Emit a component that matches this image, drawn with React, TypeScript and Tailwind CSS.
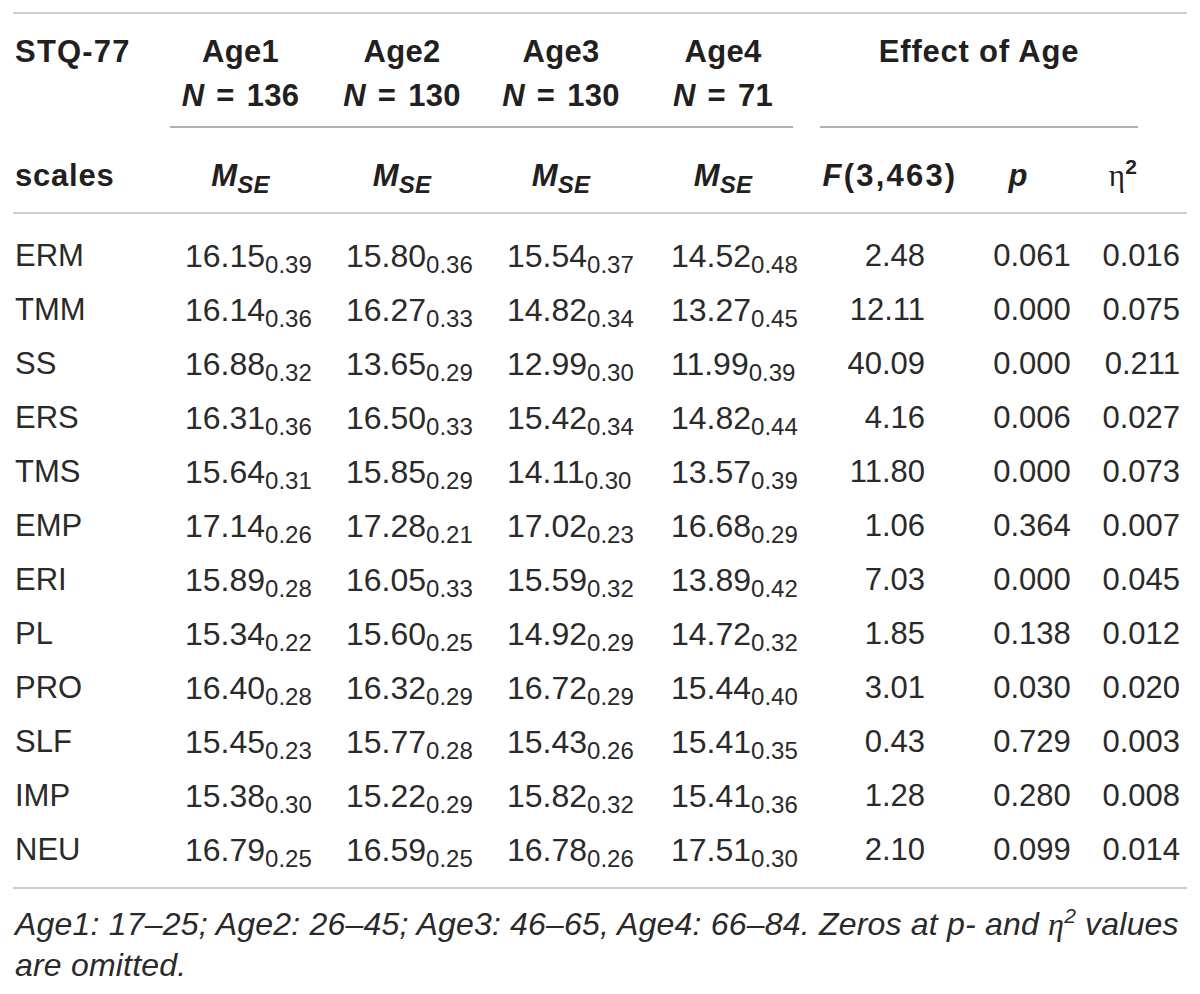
const ROWS: [string, string[], string[], string, string, string][] = [
  ["ERM", ["16.15", "15.80", "15.54", "14.52"], ["0.39", "0.36", "0.37", "0.48"], "2.48", "0.061", "0.016"],
  ["TMM", ["16.14", "16.27", "14.82", "13.27"], ["0.36", "0.33", "0.34", "0.45"], "12.11", "0.000", "0.075"],
  ["SS", ["16.88", "13.65", "12.99", "11.99"], ["0.32", "0.29", "0.30", "0.39"], "40.09", "0.000", "0.211"],
  ["ERS", ["16.31", "16.50", "15.42", "14.82"], ["0.36", "0.33", "0.34", "0.44"], "4.16", "0.006", "0.027"],
  ["TMS", ["15.64", "15.85", "14.11", "13.57"], ["0.31", "0.29", "0.30", "0.39"], "11.80", "0.000", "0.073"],
  ["EMP", ["17.14", "17.28", "17.02", "16.68"], ["0.26", "0.21", "0.23", "0.29"], "1.06", "0.364", "0.007"],
  ["ERI", ["15.89", "16.05", "15.59", "13.89"], ["0.28", "0.33", "0.32", "0.42"], "7.03", "0.000", "0.045"],
  ["PL", ["15.34", "15.60", "14.92", "14.72"], ["0.22", "0.25", "0.29", "0.32"], "1.85", "0.138", "0.012"],
  ["PRO", ["16.40", "16.32", "16.72", "15.44"], ["0.28", "0.29", "0.29", "0.40"], "3.01", "0.030", "0.020"],
  ["SLF", ["15.45", "15.77", "15.43", "15.41"], ["0.23", "0.28", "0.26", "0.35"], "0.43", "0.729", "0.003"],
  ["IMP", ["15.38", "15.22", "15.82", "15.41"], ["0.30", "0.29", "0.32", "0.36"], "1.28", "0.280", "0.008"],
  ["NEU", ["16.79", "16.59", "16.78", "17.51"], ["0.25", "0.25", "0.26", "0.30"], "2.10", "0.099", "0.014"],
];

// per age column: header offset and data left padding
const GROUPS = [
  { label: "Age1", n: "136", head: "pr-[4px]", data: "pl-[20px]" },
  { label: "Age2", n: "130", head: "pl-[8px]", data: "pl-[26px]" },
  { label: "Age3", n: "130", head: "pr-[4px]", data: "pl-[31px]" },
  { label: "Age4", n: "71", head: "pr-[19px]", data: "pl-[21px]" },
];

function Mse() {
  return (
    <span className="italic">
      M<span className="relative top-[7px] text-[24px] leading-none">SE</span>
    </span>
  );
}

function Eta({ bold }: { bold?: boolean }) {
  return (
    <span>
      <span className="font-['Liberation_Serif',serif] font-normal">η</span>
      <span className={`relative -top-[12px] text-[21px] leading-none ${bold ? "font-bold" : ""}`}>2</span>
    </span>
  );
}

export default function App() {
  return (
    <div className="min-h-[994px] bg-white px-[13px] pt-[12px] font-['Liberation_Sans',Arial,sans-serif] text-[#231f20]">
      <table className="w-[1174px] table-fixed border-collapse">
        <colgroup>
          <col className="w-[152px]" />
          <col className="w-[155px]" />
          <col className="w-[156px]" />
          <col className="w-[174px]" />
          <col className="w-[165px]" />
          <col className="w-[150px]" />
          <col className="w-[120px]" />
          <col className="w-[102px]" />
        </colgroup>
        <thead className="text-[31px] font-bold leading-[44px] tracking-[0.3px]">
          <tr className="border-t-2 border-[#cfcfcf] align-top">
            <th className="pt-[16px] pl-[2px] text-left tracking-[1.2px]">STQ-77</th>
            {GROUPS.map((g) => (
              <th key={g.label} className={`pt-[16px] text-center ${g.head}`}>
                <div>{g.label}</div>
                <div className="whitespace-nowrap">
                  <span className="italic">N</span>
                  <span className="mx-[12px]">=</span>
                  {g.n}
                </div>
              </th>
            ))}
            <th colSpan={3} className="pt-[16px]">
              <div className="ml-[5px] mr-[49px] text-center tracking-[0.8px]">Effect of Age</div>
            </th>
          </tr>
          <tr>
            <td className="pt-[8px]" />
            <td colSpan={4} className="pt-[8px]">
              <div className="ml-[5px] mr-[22px] border-t-2 border-[#b0b0b0]" />
            </td>
            <td colSpan={3} className="pt-[8px]">
              <div className="ml-[5px] mr-[49px] border-t-2 border-[#b0b0b0]" />
            </td>
          </tr>
          <tr className="border-b-2 border-[#cfcfcf]">
            <th className="pt-[26px] pb-[14px] pl-[2px] text-left tracking-[0.8px]">scales</th>
            {GROUPS.map((g) => (
              <th key={g.label} className={`pt-[26px] pb-[14px] text-center ${g.head}`}>
                <Mse />
              </th>
            ))}
            <th className="pt-[26px] pb-[14px] text-center tracking-[2.2px]">
              <span className="italic">F</span>(3,463)
            </th>
            <th className="pt-[26px] pb-[14px] pr-[14px] text-center italic">p</th>
            <th className="pt-[26px] pb-[14px] pr-[26px] text-center">
              <Eta bold />
            </th>
          </tr>
        </thead>
        <tbody className="border-b-2 border-[#cfcfcf] text-[31px] leading-[54px] text-[#2a2a2a]">
          {ROWS.map(([name, means, ses, f, p, eta], i) => {
            const pad = i === 0 ? "pt-[15px]" : i === ROWS.length - 1 ? "pb-[10px]" : "";
            return (
              <tr key={name}>
                <td className={`${pad} pl-[2px]`}>{name}</td>
                {means.map((m, j) => (
                  <td key={j} className={`${pad} ${GROUPS[j].data} text-left text-[32px] whitespace-nowrap`}>
                    {m}
                    <span className="relative top-[6px] text-[24px] leading-none">{ses[j]}</span>
                  </td>
                ))}
                <td className={`${pad} pr-[40px] text-right`}>{f}</td>
                <td className={`${pad} pl-[14px] text-center`}>{p}</td>
                <td className={`${pad} pr-[7px] text-right`}>{eta}</td>
              </tr>
            );
          })}
        </tbody>
      </table>
      <p className="mt-[15px] pl-[2px] text-[32px] leading-[41px] tracking-[0.2px] italic text-[#2a2a2a]">
        Age1: 17–25; Age2: 26–45; Age3: 46–65, Age4: 66–84. Zeros at p- and <Eta /> values are omitted.
      </p>
    </div>
  );
}
